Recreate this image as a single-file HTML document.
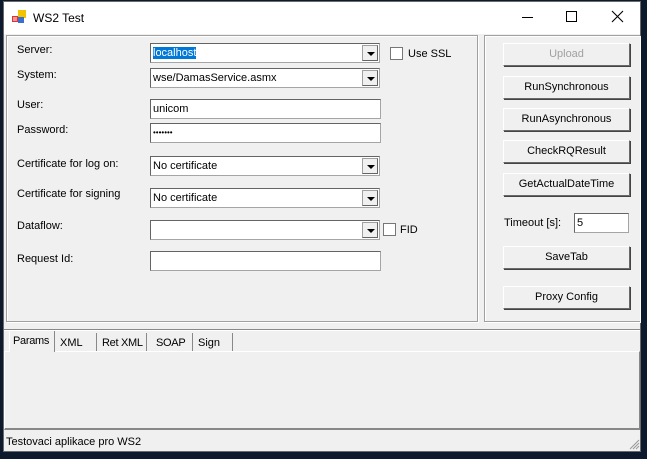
<!DOCTYPE html>
<html><head><style>
*{box-sizing:border-box;margin:0;padding:0}
body{width:647px;height:459px;background:#0d1a2e;position:relative;overflow:hidden;font-family:"Liberation Sans",Arial,sans-serif;font-size:11px;color:#000}
.a{position:absolute;white-space:nowrap}
.win{left:3px;top:1px;width:638px;height:451px;background:#f0f0f0;border:1px solid #6a6a6a}
.title{left:4px;top:2px;width:636px;height:32px;background:#fff}
.grp{border:1px solid #a0a0a0;box-shadow:inset 1px 1px 0 #fff,1px 1px 0 #fff}
.tb{background:#fff;border:1px solid #a5a5a5;border-top-color:#646464;border-left-color:#646464;height:20px;padding:3px 2px 0;white-space:nowrap;overflow:hidden}
.dd{position:absolute;right:1px;top:1px;width:16px;height:16px;background:#f0f0f0;border:1px solid #a0a0a0;border-right-color:#646464;border-bottom-color:#646464}
.dd:after{content:"";position:absolute;left:4px;top:6px;border-left:4px solid transparent;border-right:4px solid transparent;border-top:4px solid #000}
.btn{left:503px;width:127px;height:23px;background:#f0f0f0;border:1px solid #fff;border-right-color:#6a6a6a;border-bottom-color:#6a6a6a;box-shadow:1px 1px 0 #444;text-align:center;line-height:21px}
.lbl{left:17px}
.cb{width:13px;height:13px;background:#fff;border:1px solid #777}
.sep{top:333px;width:1px;height:18px;background:#888}
</style></head><body>
<div class="a win"></div>
<div class="a title"></div>
<svg class="a" style="left:12px;top:10px" width="14" height="14"><rect x="0" y="6" width="6" height="6" fill="#d33"/><rect x="6" y="0" width="8" height="8" fill="#f2c400"/><rect x="6" y="7" width="6" height="6" fill="#3a6fd0"/><rect x="1" y="7" width="4" height="4" fill="#fff" opacity=".5"/></svg>
<div class="a" style="left:33px;top:11px;font-size:12px">WS2 Test</div>
<div class="a" style="left:522px;top:17px;width:11px;height:1px;background:#000"></div>
<div class="a" style="left:566px;top:11px;width:11px;height:11px;border:1px solid #000"></div>
<svg class="a" style="left:611px;top:10px" width="13" height="13"><path d="M1 1L12 12M12 1L1 12" stroke="#000" stroke-width="1.1"/></svg>

<div class="a grp" style="left:6px;top:35px;width:472px;height:287px"></div>
<div class="a grp" style="left:484px;top:35px;width:156px;height:287px;border-right:none"></div>

<div class="a lbl" style="top:44px">Server:</div>
<div class="a lbl" style="top:69px">System:</div>
<div class="a lbl" style="top:99px">User:</div>
<div class="a lbl" style="top:124px">Password:</div>
<div class="a lbl" style="top:158px">Certificate for log on:</div>
<div class="a lbl" style="top:188px">Certificate for signing</div>
<div class="a lbl" style="top:220px">Dataflow:</div>
<div class="a lbl" style="top:253px">Request Id:</div>

<div class="a tb" style="left:150px;top:43px;width:230px"><span style="background:#0078d7;color:#fff">localhost</span><div class="dd"></div></div>
<div class="a cb" style="left:390px;top:47px"></div><div class="a" style="left:408px;top:48px">Use SSL</div>
<div class="a tb" style="left:150px;top:68px;width:230px">wse/DamasService.asmx<div class="dd"></div></div>
<div class="a tb" style="left:150px;top:99px;width:231px">unicom</div>
<div class="a tb" style="left:150px;top:123px;width:231px;font-size:8px;padding-top:4px">•••••••</div>
<div class="a tb" style="left:150px;top:156px;width:230px">No certificate<div class="dd"></div></div>
<div class="a tb" style="left:150px;top:188px;width:230px">No certificate<div class="dd"></div></div>
<div class="a tb" style="left:150px;top:220px;width:230px"><div class="dd"></div></div>
<div class="a cb" style="left:383px;top:223px"></div><div class="a" style="left:400px;top:224px">FID</div>
<div class="a tb" style="left:150px;top:251px;width:231px"></div>

<div class="a btn" style="top:43px;color:#a0a0a0">Upload</div>
<div class="a btn" style="top:76px">RunSynchronous</div>
<div class="a btn" style="top:108px">RunAsynchronous</div>
<div class="a btn" style="top:140px">CheckRQResult</div>
<div class="a btn" style="top:173px">GetActualDateTime</div>
<div class="a" style="left:504px;top:217px">Timeout [s]:</div>
<div class="a tb" style="left:574px;top:213px;width:55px">5</div>
<div class="a btn" style="top:246px">SaveTab</div>
<div class="a btn" style="top:286px">Proxy Config</div>

<div class="a" style="left:4px;top:329px;width:636px;height:2px;border-top:1px solid #888;border-bottom:1px solid #fff"></div>
<div class="a" style="left:4px;top:351px;width:636px;height:79px;border:1px solid #fff;border-right-color:#888;border-bottom:2px solid #888;background:#f0f0f0"></div>
<div class="a" style="left:9px;top:331px;width:1px;height:21px;background:#fff"></div>
<div class="a sep" style="left:54px;top:331px;height:21px"></div>
<div class="a" style="left:10px;top:351px;width:44px;height:1px;background:#f0f0f0"></div>
<div class="a" style="left:13px;top:335px;letter-spacing:-.3px">Params</div>
<div class="a" style="left:60px;top:337px">XML</div>
<div class="a sep" style="left:96px"></div>
<div class="a" style="left:102px;top:337px;letter-spacing:-.3px">Ret XML</div>
<div class="a sep" style="left:146px"></div>
<div class="a" style="left:156px;top:337px;letter-spacing:-.3px">SOAP</div>
<div class="a sep" style="left:192px"></div>
<div class="a" style="left:198px;top:337px">Sign</div>
<div class="a sep" style="left:232px"></div>
<div class="a" style="left:6px;top:436px">Testovaci aplikace pro WS2</div>
<svg class="a" style="left:628px;top:438px" width="12" height="12"><path d="M11 2L2 11M11 5L5 11M11 8L8 11" stroke="#999"/></svg>
</body></html>
